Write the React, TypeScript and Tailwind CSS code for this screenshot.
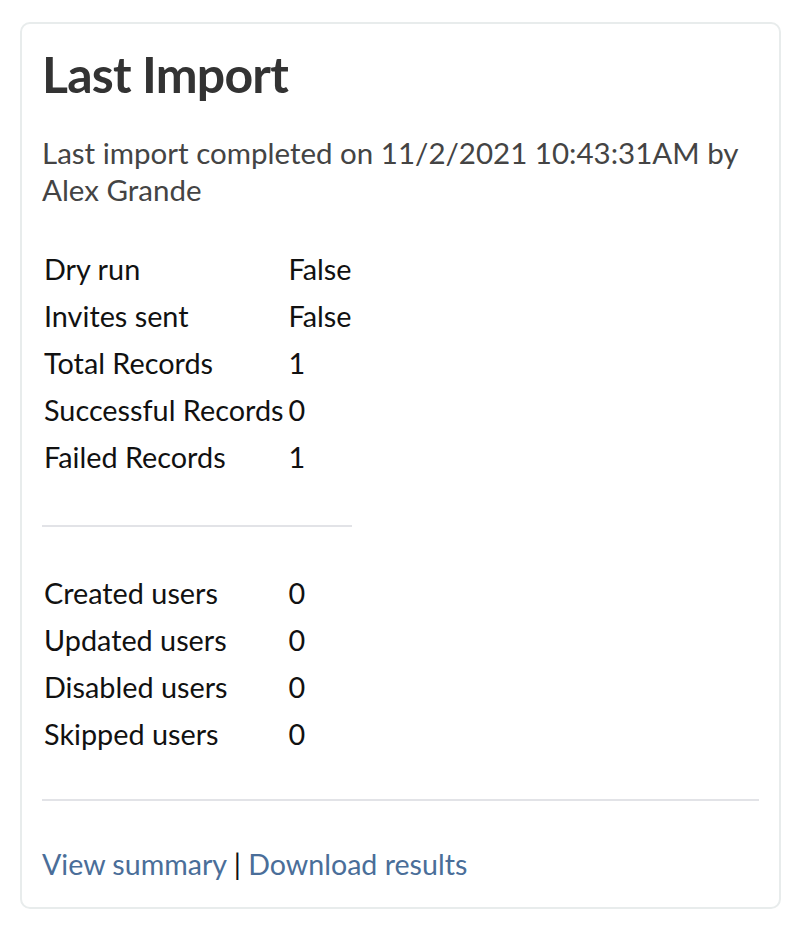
import React from "react";

const importStats = [
  { label: "Dry run", value: "False" },
  { label: "Invites sent", value: "False" },
  { label: "Total Records", value: "1" },
  { label: "Successful Records", value: "0" },
  { label: "Failed Records", value: "1" },
];

const userStats = [
  { label: "Created users", value: "0" },
  { label: "Updated users", value: "0" },
  { label: "Disabled users", value: "0" },
  { label: "Skipped users", value: "0" },
];

function StatRow({ label, value }: { label: string; value: string }) {
  return (
    <>
      <div className="pl-[2px] h-[47px] flex items-center">{label}</div>
      <div className="pl-[5px] h-[47px] flex items-center">{value}</div>
    </>
  );
}

export default function App() {
  return (
    <div className="min-h-screen bg-white pt-[22px] px-[20px] pb-[26px] font-['Lato',sans-serif]">
      <div className="w-[761px] border-2 border-[#e8ecec] rounded-[10px] px-[20px] pt-[20px] pb-[25px]">
        <h1 className="text-[50px] leading-[60px] font-bold text-[#333] tracking-[-0.8px]">
          Last Import
        </h1>

        <p className="mt-[30px] text-[29.5px] leading-[37px] text-[#444]">
          Last import completed on 11/2/2021 10:43:31AM by Alex Grande
        </p>

        <div className="mt-[38px] grid grid-cols-[max-content_max-content] text-[28.8px] text-[#111] w-fit">
          {importStats.map((s) => (
            <StatRow key={s.label} {...s} />
          ))}
          <div className="col-span-2 pt-[44px] pb-[43px]">
            <div className="h-[2px] bg-[#e2e3e7]" />
          </div>
          {userStats.map((s) => (
            <StatRow key={s.label} {...s} />
          ))}
        </div>

        <div className="mt-[41px] h-[2px] bg-[#e2e3e7]" />

        <div className="mt-[45px] text-[28.6px] leading-[36px] text-[#111]">
          <a href="#" className="text-[#4a6e99]">
            View summary
          </a>{" "}
          |{" "}
          <a href="#" className="text-[#4a6e99]">
            Download results
          </a>
        </div>
      </div>
    </div>
  );
}
